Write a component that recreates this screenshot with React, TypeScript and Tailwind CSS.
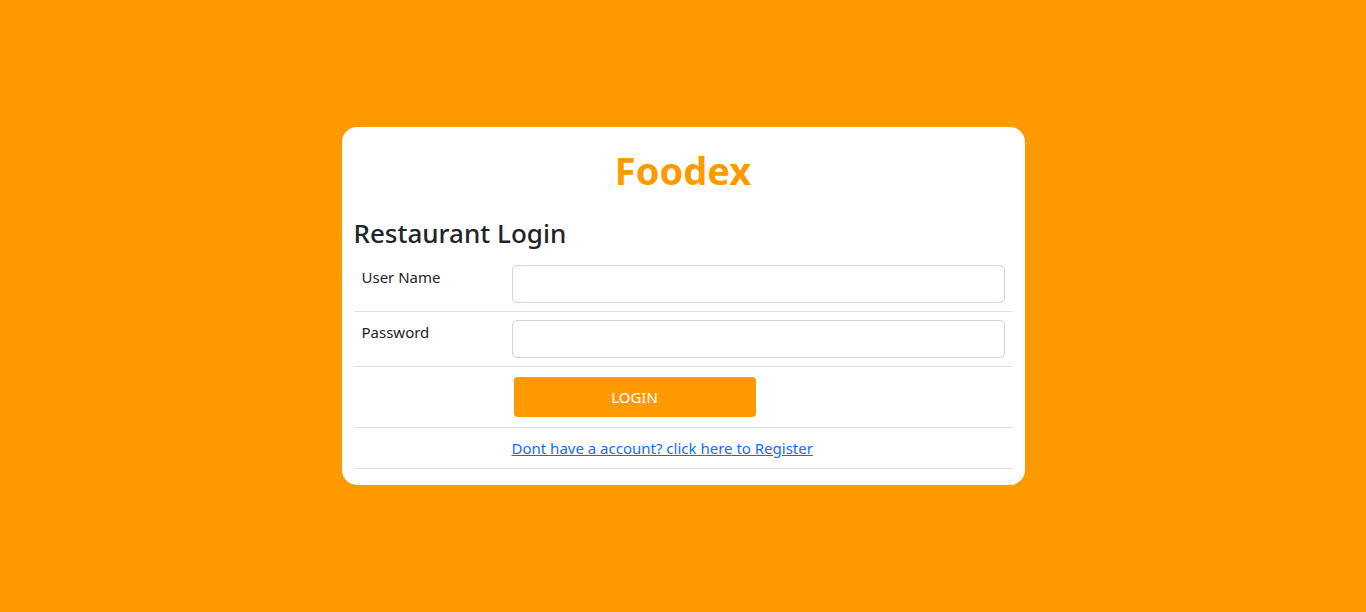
import React from "react";

const font = { fontFamily: '"Noto Sans", "Open Sans", sans-serif' };

export default function App() {
  return (
    <div
      className="flex h-screen w-full items-center justify-center bg-[#ff9900]"
      style={font}
    >
      {/* Card */}
      <div className="w-[683px] rounded-[15px] bg-white px-3 pb-4 pt-[19px]">
        <h1 className="text-center text-[38px] font-bold leading-[48px] text-[#ff9900]">
          Foodex
        </h1>
        <h3 className="mt-[22px] mb-[7px] text-[26px] font-medium leading-[34px] text-[#212529]">
          Restaurant Login
        </h3>

        <table className="w-full border-collapse text-[15px] text-[#212529]">
          <tbody>
            <tr className="border-b border-[#dee2e6]">
              <td className="w-[150px] p-2 align-top leading-6">User Name</td>
              <td className="p-2">
                <input
                  type="text"
                  className="block h-[38px] w-full rounded-[5px] border border-[#ced4da] px-3 outline-none"
                />
              </td>
            </tr>
            <tr className="border-b border-[#dee2e6]">
              <td className="p-2 align-top leading-6">Password</td>
              <td className="p-2">
                <input
                  type="password"
                  className="block h-[38px] w-full rounded-[5px] border border-[#ced4da] px-3 outline-none"
                />
              </td>
            </tr>
            <tr className="border-b border-[#dee2e6]">
              <td className="p-2"></td>
              <td className="p-2">
                <button className="m-[2px] block h-10 w-[242px] rounded-[4px] bg-[#ff9900] text-[15px] text-white">
                  LOGIN
                </button>
              </td>
            </tr>
            <tr className="border-b border-[#dee2e6]">
              <td className="p-2"></td>
              <td className="p-2 leading-6">
                <a href="#" className="text-[#0d6efd] underline">
                  Dont have a account? click here to Register
                </a>
              </td>
            </tr>
          </tbody>
        </table>
      </div>
    </div>
  );
}
